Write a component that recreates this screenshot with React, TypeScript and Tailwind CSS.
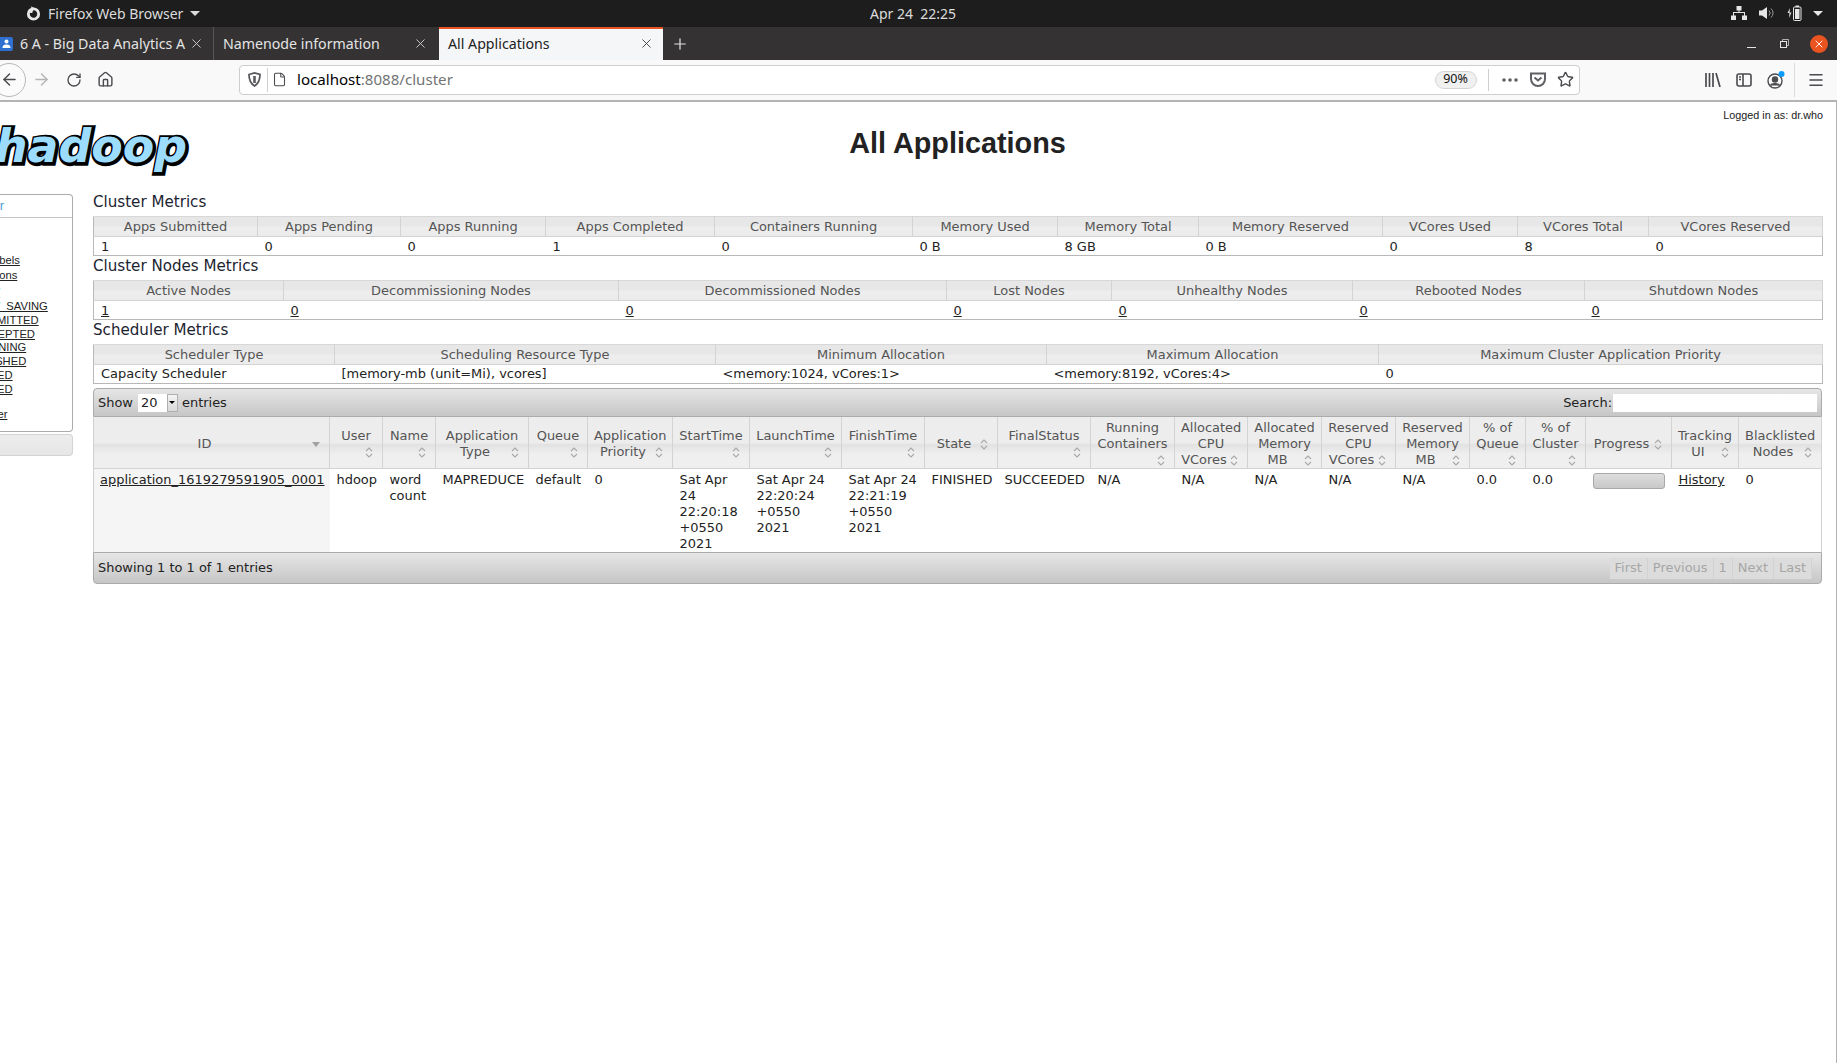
import { ArrowLeft, ArrowRight, RotateCw, House, File, Star, Menu, X, Plus } from "lucide-react"

const clusterCols = [
  { label: "Apps Submitted", value: "1", w: "w-[164px]" },
  { label: "Apps Pending", value: "0", w: "w-[143px]" },
  { label: "Apps Running", value: "0", w: "w-[145px]" },
  { label: "Apps Completed", value: "1", w: "w-[169px]" },
  { label: "Containers Running", value: "0", w: "w-[198px]" },
  { label: "Memory Used", value: "0 B", w: "w-[145px]" },
  { label: "Memory Total", value: "8 GB", w: "w-[141px]" },
  { label: "Memory Reserved", value: "0 B", w: "w-[184px]" },
  { label: "VCores Used", value: "0", w: "w-[135px]" },
  { label: "VCores Total", value: "8", w: "w-[131px]" },
  { label: "VCores Reserved", value: "0", w: "w-[174px]" },
]

const nodeCols = [
  { label: "Active Nodes", value: "1", w: "w-[190px]" },
  { label: "Decommissioning Nodes", value: "0", w: "w-[335px]" },
  { label: "Decommissioned Nodes", value: "0", w: "w-[328px]" },
  { label: "Lost Nodes", value: "0", w: "w-[165px]" },
  { label: "Unhealthy Nodes", value: "0", w: "w-[241px]" },
  { label: "Rebooted Nodes", value: "0", w: "w-[232px]" },
  { label: "Shutdown Nodes", value: "0", w: "w-[238px]" },
]

const schedulerCols = [
  { label: "Scheduler Type", value: "Capacity Scheduler", w: "w-[241px]" },
  { label: "Scheduling Resource Type", value: "[memory-mb (unit=Mi), vcores]", w: "w-[381px]" },
  { label: "Minimum Allocation", value: "<memory:1024, vCores:1>", w: "w-[331px]" },
  { label: "Maximum Allocation", value: "<memory:8192, vCores:4>", w: "w-[332px]" },
  { label: "Maximum Cluster Application Priority", value: "0", w: "w-[444px]" },
]

const appCols = [
  { label: "ID", value: "application_1619279591905_0001", w: "w-[236px]" },
  { label: "User", value: "hdoop", w: "w-[53px]" },
  { label: "Name", value: "word count", w: "w-[53px]" },
  { label: "Application Type", value: "MAPREDUCE", w: "w-[93px]" },
  { label: "Queue", value: "default", w: "w-[59px]" },
  { label: "Application Priority", value: "0", w: "w-[85px]" },
  { label: "StartTime", value: "Sat Apr 24 22:20:18 +0550 2021", w: "w-[77px]" },
  { label: "LaunchTime", value: "Sat Apr 24 22:20:24 +0550 2021", w: "w-[92px]" },
  { label: "FinishTime", value: "Sat Apr 24 22:21:19 +0550 2021", w: "w-[83px]" },
  { label: "State", value: "FINISHED", w: "w-[73px]" },
  { label: "FinalStatus", value: "SUCCEEDED", w: "w-[93px]" },
  { label: "Running Containers", value: "N/A", w: "w-[84px]" },
  { label: "Allocated CPU VCores", value: "N/A", w: "w-[73px]" },
  { label: "Allocated Memory MB", value: "N/A", w: "w-[74px]" },
  { label: "Reserved CPU VCores", value: "N/A", w: "w-[74px]" },
  { label: "Reserved Memory MB", value: "N/A", w: "w-[74px]" },
  { label: "% of Queue", value: "0.0", w: "w-[56px]" },
  { label: "% of Cluster", value: "0.0", w: "w-[60px]" },
  { label: "Progress", value: "", w: "w-[86px]" },
  { label: "Tracking UI", value: "History", w: "w-[67px]" },
  { label: "Blacklisted Nodes", value: "0", w: "w-[83px]" },
]

const appStates = ["NEW", "NEW_SAVING", "SUBMITTED", "ACCEPTED", "RUNNING", "FINISHED", "FAILED", "KILLED"]
const pager = ["First", "Previous", "1", "Next", "Last"]

function SortIcon({ sorted }: { sorted?: boolean }) {
  return (
    <span className="float-right flex h-[16px] w-[14px] items-center justify-center">
      {sorted ? (
        <svg width="8" height="5" viewBox="0 0 8 5"><path d="M0 0h8L4 5z" fill="#a0a0a0" /></svg>
      ) : (
        <svg width="8" height="11" viewBox="0 0 8 11" fill="none" stroke="#a8a8a8" strokeWidth="1.1">
          <path d="M1 4l3-3 3 3M1 7l3 3 3-3" />
        </svg>
      )}
    </span>
  )
}

function MetricsTable({ title, cols, link, tight }: { title: string; cols: { label: string; value: string; w: string }[]; link?: boolean; tight?: boolean }) {
  return (
    <section className="h-[64px]">
      <h3 className="h-[24px] text-[15.12px] leading-[20px] text-[#1c2330]">{title}</h3>
      <table className="w-full table-fixed border border-[#b8b8b8] border-t-[#d8d8d8]">
        <colgroup>
          {cols.map((c) => <col key={c.label} className={c.w} />)}
        </colgroup>
        <thead>
          <tr className="h-[20px] bg-[linear-gradient(#e7e7e7_0%,#e7e7e7_45%,#eeeeee_50%,#ebebeb_100%)]">
            {cols.map((c) => (
              <th key={c.label} className="border-r border-b border-[#d3d3d3] p-0 text-center text-[12.96px] font-normal text-[#555]">{c.label}</th>
            ))}
          </tr>
        </thead>
        <tbody>
          <tr className="h-[19px]">
            {cols.map((c) => (
              <td key={c.label} className={`px-[7px] text-[12.96px] leading-[16px] text-[#222] ${tight ? "pt-0 pb-[1px]" : "pt-[1px] pb-0"}`}>
                {link ? <a className="underline">{c.value}</a> : c.value}
              </td>
            ))}
          </tr>
        </tbody>
      </table>
    </section>
  )
}

function TopBar() {
  return (
    <div className="relative flex h-[27px] items-center bg-[#1d1d1d] pb-[1px] font-['Noto_Sans',sans-serif] text-[14px] text-[#dcdcdc]">
      <svg className="ml-[26px]" width="15" height="15" viewBox="0 0 16 16">
        <circle cx="8" cy="8.5" r="7" fill="#e8e8e8" />
        <path d="M8 4.5a4 4 0 1 1-3.6 2.3C5.5 8 7 7.600 7 6.500 7 5.700 7.400 5 8 4.500z" fill="#1d1d1d" />
        <path d="M5 0.500C6.500 1 9 1.500 10 3.500L7 4z" fill="#e8e8e8" />
      </svg>
      <span className="ml-[7px] w-[138px] whitespace-nowrap">Firefox Web Browser</span>
      <span className="ml-[4px] h-0 w-0 border-x-[5px] border-t-[5px] border-x-transparent border-t-[#dcdcdc]" />
      <span className="absolute left-[870px] whitespace-pre">Apr 24  22:25</span>
      <div className="ml-auto flex items-center pr-[14px]">
        <svg width="16" height="14" viewBox="0 0 16 14" fill="#e6e6e6">
          <path d="M5.500 0h5v4.500h-2V6H14v3.500h2V14h-5V9.500h2V7H3v2.500h2V14H0V9.500h2V6h5.500V4.500h-2z" />
        </svg>
        <svg className="ml-[12px]" width="16" height="14" viewBox="0 0 16 14" fill="none">
          <path d="M0 4.500h3L8 1v12L3 9.500H0z" fill="#e6e6e6" />
          <path d="M10 4.500a3.500 3.500 0 0 1 0 5M12 2.500a6 6 0 0 1 0 9" stroke="#9a9a9a" strokeWidth="1" />
        </svg>
        <svg className="ml-[12px]" width="15" height="16" viewBox="0 0 15 16" fill="none">
          <path d="M3 3L0.500 8H2.500L2 13 4.500 7.500H2.500z" fill="#e6e6e6" />
          <rect x="6.500" y="2" width="7.500" height="13.500" rx="1" stroke="#e6e6e6" />
          <rect x="8.500" y="0.500" width="3.500" height="1.500" fill="#e6e6e6" />
          <rect x="8" y="4" width="4.500" height="10" fill="#e6e6e6" />
        </svg>
        <span className="ml-[11px] h-0 w-0 border-x-[5px] border-t-[5px] border-x-transparent border-t-[#e6e6e6]" />
      </div>
    </div>
  )
}

function TabBar() {
  return (
    <div className="flex h-[33px] items-stretch bg-[#343233] font-['Noto_Sans',sans-serif] text-[14.2px] text-[#e4e4e4]">
      <div className="flex w-[214px] items-center border-r border-[#55555a]">
        <span className="flex h-[14px] w-[13px] items-center justify-center rounded-r-[2px] bg-[#2f6fd0]">
          <svg width="9" height="9" viewBox="0 0 9 9" fill="#fff"><circle cx="4.500" cy="2.500" r="2" /><path d="M0.500 9c0-3 2-3.500 4-3.500s4 .5 4 3.500z" /></svg>
        </span>
        <span className="ml-[7px] w-[170px] whitespace-nowrap">6 A - Big Data Analytics A</span>
        <X size={15} strokeWidth={1.5} className="ml-[-1px] text-[#cfcfcf]" />
      </div>
      <div className="flex w-[225px] items-center pl-[9px]">
        <span className="w-[190px]">Namenode information</span>
        <X size={15} strokeWidth={1.5} className="text-[#cfcfcf]" />
      </div>
      <div className="flex w-[224px] items-center border-t-2 border-[#e95420] bg-[#f5f6f7] pb-[2px] pl-[9px] text-[#222]">
        <span className="w-[191px]">All Applications</span>
        <X size={15} strokeWidth={1.5} className="text-[#444]" />
      </div>
      <div className="flex w-[33px] items-center justify-center">
        <Plus size={18} strokeWidth={1.6} className="text-[#e4e4e4]" />
      </div>
      <div className="ml-auto flex items-center pr-[9px] text-[#e4e4e4]">
        <span className="mt-[8px] h-[1px] w-[9px] bg-[#e4e4e4]" />
        <svg className="ml-[24px]" width="9" height="9" viewBox="0 0 9 9" fill="none" stroke="#e4e4e4">
          <rect x="0.500" y="2.500" width="6" height="6" />
          <path d="M2.500 2.500V0.500h6v6H6.500" strokeWidth="0.7" />
        </svg>
        <span className="ml-[21px] flex h-[18px] w-[18px] items-center justify-center rounded-full bg-[#e95420]">
          <X size={12} strokeWidth={1.8} className="text-white" />
        </span>
      </div>
    </div>
  )
}

function NavBar() {
  return (
    <div className="flex h-[42px] items-center border-b-2 border-[#b4b4b4] bg-[#f9f9fa] pb-[1px] font-['Noto_Sans',sans-serif] text-[#4a4a4f]">
      <div className="ml-[-8px] flex h-[34px] w-[34px] shrink-0 items-center justify-center rounded-full border border-[#b8b8b8] bg-[#fbfbfb]">
        <ArrowLeft size={19} strokeWidth={1.8} />
      </div>
      <ArrowRight size={19} strokeWidth={1.8} className="ml-[6px] text-[#b4b4b4]" />
      <RotateCw size={16} strokeWidth={2} className="ml-[15px]" />
      <House size={17} strokeWidth={2} className="ml-[15px]" />
      <div className="ml-[125px] flex h-[30px] w-[1341px] items-center rounded-[4px] border border-[#cdcdcd] bg-white">
        <svg className="ml-[8px]" width="13" height="15" viewBox="0 0 13 15" fill="none" stroke="#5a5a5f" strokeWidth="1.800">
          <path d="M1 2.500 6.500 1 12 2.500c0 5-1.500 9-5.500 11.500C2.500 11.500 1 7.500 1 2.500z" />
          <path d="M6.500 4v7" strokeWidth="2.600" />
        </svg>
        <span className="ml-[6px] h-[24px] w-[1px] bg-[#cfcfcf]" />
        <File size={15} strokeWidth={1.7} className="ml-[4px]" />
        <span className="ml-[10px] mt-[1px] text-[15.1px] leading-none text-black">localhost<span className="text-[#737373]">:8088/cluster</span></span>
        <span className="ml-auto flex h-[18px] w-[42px] items-center justify-center rounded-full border border-[#d4d4d4] bg-[#f0f0f0] text-[12.5px] text-[#111]">90%</span>
        <span className="ml-[11px] h-[22px] w-[1px] bg-[#cfcfcf]" />
        <svg className="ml-[13px]" width="16" height="4" viewBox="0 0 16 4" fill="#5f5f64"><circle cx="2" cy="2" r="1.800" /><circle cx="8" cy="2" r="1.800" /><circle cx="14" cy="2" r="1.800" /></svg>
        <svg className="ml-[12px]" width="16" height="15" viewBox="0 0 16 15" fill="none" stroke="#5f5f64" strokeWidth="2">
          <path d="M1 1.500h14V7a7 7 0 0 1-14 0z" />
          <path d="M4.500 5.500 8 8.500l3.500-3" />
        </svg>
        <Star size={17} strokeWidth={2} className="ml-[11.500px] mr-[5px]" />
      </div>
      <svg className="ml-[125px]" width="16" height="14" viewBox="0 0 16 14" fill="none" stroke="#4a4a4f" strokeWidth="1.700">
        <path d="M1 0v14M4.500 0v14M8 0v14M11 0l4 14" />
      </svg>
      <svg className="ml-[15px]" width="16" height="14" viewBox="0 0 16 14" fill="none" stroke="#4a4a4f" strokeWidth="1.600">
        <rect x="1" y="1" width="14" height="12" rx="2" />
        <path d="M7 1v12M3 4h2M3 6.500h2" />
      </svg>
      <svg className="ml-[15px]" width="18" height="18" viewBox="0 0 18 18" fill="none" stroke="#4a4a4f" strokeWidth="1.400">
        <circle cx="8" cy="10" r="7" />
        <circle cx="8" cy="8.500" r="2.500" fill="#4a4a4f" />
        <path d="M3.500 14.500c1-2.500 8-2.500 9 0" fill="#4a4a4f" />
        <circle cx="14.500" cy="3" r="3" fill="#0a9dff" stroke="none" />
      </svg>
      <span className="ml-[9px] h-[34px] w-[1px] bg-[#dcdcdc]" />
      <Menu size={18} strokeWidth={2} className="ml-[12px]" />
    </div>
  )
}

function Logo() {
  return (
    <svg className="absolute left-0 top-[18px]" width="192" height="56" viewBox="0 0 192 56">
      <g transform="translate(0 42) scale(1 0.88)">
        <text x="-4" y="1" textLength="192" lengthAdjust="spacingAndGlyphs" fontFamily="DejaVu Sans" fontWeight="bold" fontStyle="italic" fontSize="53" fill="#000" stroke="#000" strokeWidth="6">hadoop</text>
        <text x="-5" y="0" textLength="192" lengthAdjust="spacingAndGlyphs" fontFamily="DejaVu Sans" fontWeight="bold" fontStyle="italic" fontSize="53" fill="#9bdcff" stroke="#000" strokeWidth="1.500" paintOrder="stroke">hadoop</text>
      </g>
    </svg>
  )
}

function Sidebar() {
  return (
    <aside className="mt-[2px] w-[73px] shrink-0 font-['Liberation_Sans',sans-serif] text-[11.2px] text-[#222]">
      <div className="h-[238px] overflow-hidden rounded-r-[4px] border-y border-r border-[#ababab]">
        <div className="flex h-[23px] items-center border-b border-[#c4c4c4] text-[13px] text-[#4e9fd6]">
          <span className="ml-[-37px]">Cluster</span>
        </div>
        <ul className="ml-[-43px] w-[180px] pt-[5px] leading-[15px]">
          <li><a className="underline">About</a></li>
          <li><a className="underline">Nodes</a></li>
          <li><a className="underline">Node Labels</a></li>
          <li><a className="underline">Applications</a></li>
          <ul className="pl-[17px] pt-[3px] leading-[13.85px]">
            {appStates.map((s) => <li key={s}><a className="underline">{s}</a></li>)}
          </ul>
          <li className="mt-[10px]"><a className="underline">Scheduler</a></li>
        </ul>
      </div>
      <div className="mt-[2px] h-[22px] rounded-r-[4px] border-y border-r border-[#d4d4d4] bg-[linear-gradient(#ededed,#e6e6e6)]" />
    </aside>
  )
}

function ApplicationsTable() {
  return (
    <div className="mt-[4px]">
      <div className="flex h-[29px] items-center rounded-t-[4px] border border-[#ababab] bg-[linear-gradient(#e6e6e6,#c6c6c6)] pl-[4px] pr-[4px] text-[12.96px] text-[#222]">
        <span>Show</span>
        <span className="ml-[5px] flex h-[18px] w-[40px] items-center bg-white pl-[3px]">
          20
          <span className="ml-auto flex h-[18px] w-[11px] items-center justify-center border border-[#b0b0b0] bg-[linear-gradient(#f4f4f4,#d8d8d8)]">
            <span className="h-0 w-0 border-x-[3px] border-t-[3px] border-x-transparent border-t-black" />
          </span>
        </span>
        <span className="ml-[4px]">entries</span>
        <span className="ml-auto">Search:</span>
        <span className="ml-[1px] h-[18px] w-[204px] bg-white" />
      </div>
      <table className="w-full table-fixed border-x border-[#d0d0d0]">
        <colgroup>
          {appCols.map((c) => <col key={c.label} className={c.w} />)}
        </colgroup>
        <thead>
          <tr className="h-[51px] bg-[linear-gradient(#ededed_0%,#ededed_50%,#e2e2e2_53%,#efefef_72%,#efefef_100%)]">
            {appCols.map((c, i) => (
              <th key={c.label} className="border-r border-b border-[#d3d3d3] px-[6px] pt-[3px] pb-0 text-center align-middle text-[12.96px] font-normal leading-[16px] text-[#555]">
                {c.label}
                <SortIcon sorted={i === 0} />
              </th>
            ))}
          </tr>
        </thead>
        <tbody>
          <tr className="h-[83px]">
            {appCols.map((c, i) => (
              <td key={c.label} className={`overflow-visible py-0 pt-[3px] align-top text-[12.96px] leading-[16px] text-[#222] ${i === 0 ? "bg-[#f5f5f5] px-[6px]" : "px-[7px]"}`}>
                {c.label === "Progress" ? (
                  <div className="mt-[1px] h-[16px] rounded-[3px] border border-[#a8a8a8] bg-[linear-gradient(#dedede,#c8c8c8)]" />
                ) : i === 0 || c.label === "Tracking UI" ? (
                  <a className="underline">{c.value}</a>
                ) : (
                  c.value
                )}
              </td>
            ))}
          </tr>
        </tbody>
      </table>
      <div className="flex h-[32px] items-center rounded-b-[4px] border border-[#ababab] bg-[linear-gradient(#e6e6e6,#c6c6c6)] pl-[4px] pr-[9px] text-[12.96px] text-[#222]">
        <span>Showing 1 to 1 of 1 entries</span>
        <div className="ml-auto flex h-[21px]">
          {pager.map((p) => (
            <span key={p} className="flex items-center border-r border-[#d2d2d2] bg-[#dcdcdc] px-[5px] text-[#a6a6a6]">{p}</span>
          ))}
        </div>
      </div>
    </div>
  )
}

export default function App() {
  return (
    <div className="flex h-[1063px] w-[1837px] flex-col overflow-hidden bg-white">
      <TopBar />
      <TabBar />
      <NavBar />
      <div className="flex-1 border-r border-[#b4b4b4] font-['DejaVu_Sans',sans-serif]">
        <header className="relative h-[90px]">
          <Logo />
          <p className="pr-[13px] pt-[7px] text-right font-['Liberation_Sans',sans-serif] text-[10.8px] leading-[13px] text-[#222]">Logged in as: dr.who</p>
          <h1 className="ml-[93px] mr-[14px] pt-[5px] text-center font-['Liberation_Sans',sans-serif] text-[28.8px] font-bold leading-[32px] text-[#222]">All Applications</h1>
        </header>
        <div className="flex">
          <Sidebar />
          <main className="min-w-0 flex-1 pl-[20px] pr-[14px]">
            <MetricsTable title="Cluster Metrics" cols={clusterCols} />
            <MetricsTable title="Cluster Nodes Metrics" cols={nodeCols} link />
            <MetricsTable title="Scheduler Metrics" cols={schedulerCols} tight />
            <ApplicationsTable />
          </main>
        </div>
      </div>
    </div>
  )
}
